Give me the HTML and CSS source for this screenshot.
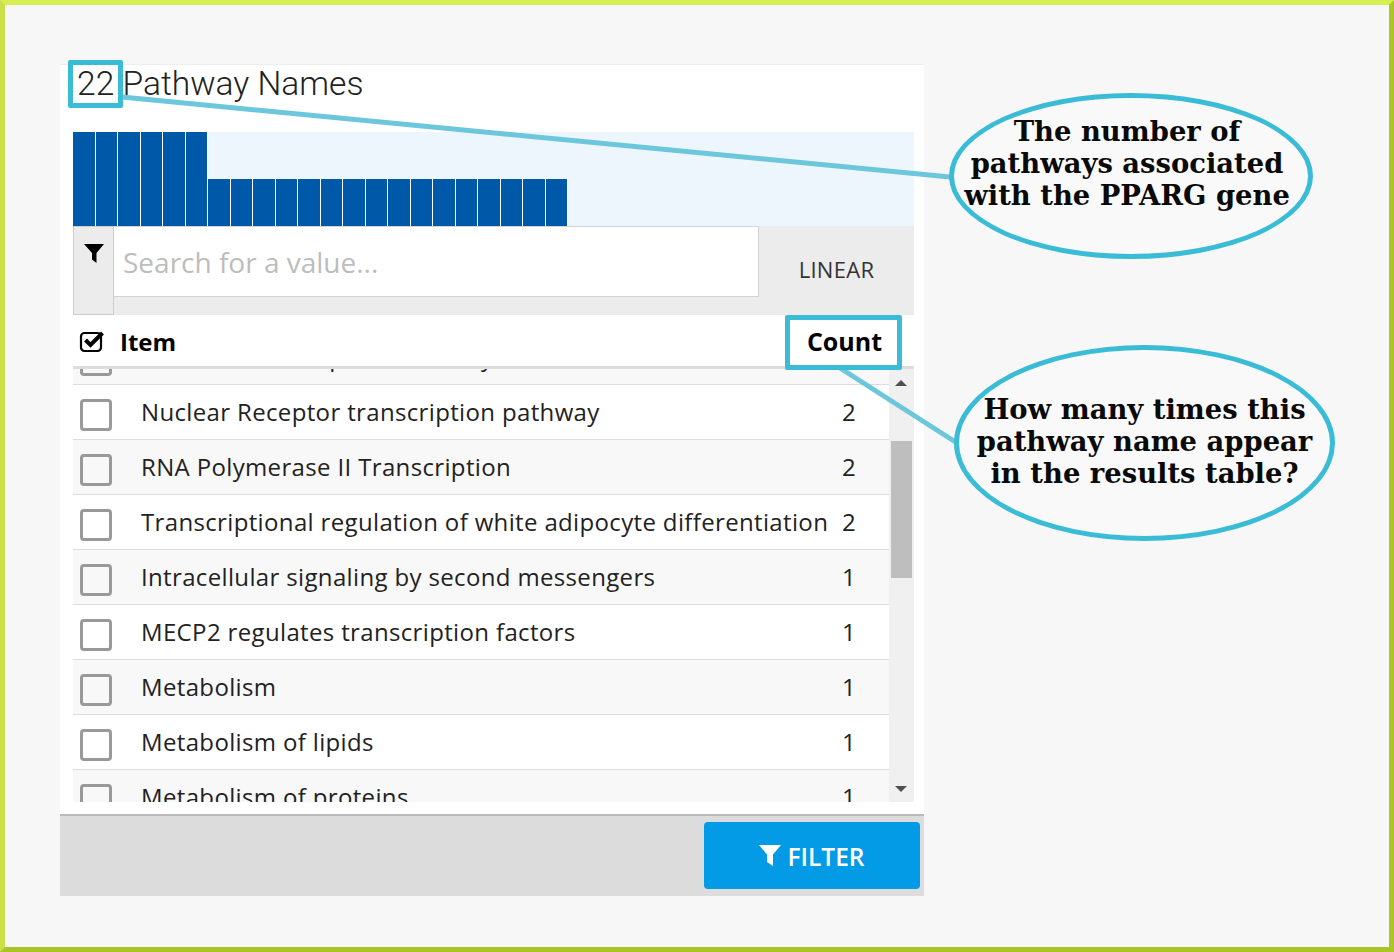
FILE: index.html
```html
<!DOCTYPE html>
<html>
  <head>
    <meta charset="utf-8">
    <link rel="stylesheet" href="styles.css">
    <title>Pathway Names</title>
  </head>
  <body>
    <div class="panel">
      <h2 class="title"><span class="count-num">22</span> Pathway Names</h2>
      <div class="bars">
        <i class="bar tall"></i><i class="bar tall"></i><i class="bar tall"></i><i class="bar tall"></i><i class="bar tall"></i><i class="bar tall"></i>
        <i class="bar"></i><i class="bar"></i><i class="bar"></i><i class="bar"></i><i class="bar"></i><i class="bar"></i><i class="bar"></i><i class="bar"></i>
        <i class="bar"></i><i class="bar"></i><i class="bar"></i><i class="bar"></i><i class="bar"></i><i class="bar"></i><i class="bar"></i><i class="bar"></i>
      </div>
      <div class="search-row">
        <div class="filter-addon">
          <svg width="22" height="22" viewBox="0 0 22 22"><path d="M0 2h20L12.500 11v10L8 17.500V11z" fill="#000"/></svg>
        </div>
        <div class="search-box">
          <div class="search-input">Search for a value...</div>
        </div>
        <div class="linear">LINEAR</div>
      </div>
      <div class="table-head">
        <svg class="head-check" width="26" height="24" viewBox="0 0 26 24">
          <rect x="2" y="4" width="20" height="18" rx="3.500" fill="none" stroke="#000" stroke-width="2.200"/>
          <path d="M6.500 11l5 5L23.500 4" fill="none" stroke="#000" stroke-width="4"/>
        </svg>
        <span class="head-item">Item</span>
        <span class="head-count">Count</span>
      </div>
      <div class="list-wrap">
        <div class="list">
          <div class="row first"><span class="box"></span><span class="name">Generic Transcription Pathway</span><span class="num">2</span></div>
          <div class="row"><span class="box"></span><span class="name">Nuclear Receptor transcription pathway</span><span class="num">2</span></div>
          <div class="row"><span class="box"></span><span class="name">RNA Polymerase II Transcription</span><span class="num">2</span></div>
          <div class="row"><span class="box"></span><span class="name">Transcriptional regulation of white adipocyte differentiation</span><span class="num">2</span></div>
          <div class="row"><span class="box"></span><span class="name">Intracellular signaling by second messengers</span><span class="num">1</span></div>
          <div class="row"><span class="box"></span><span class="name">MECP2 regulates transcription factors</span><span class="num">1</span></div>
          <div class="row"><span class="box"></span><span class="name">Metabolism</span><span class="num">1</span></div>
          <div class="row"><span class="box"></span><span class="name">Metabolism of lipids</span><span class="num">1</span></div>
          <div class="row"><span class="box"></span><span class="name">Metabolism of proteins</span><span class="num">1</span></div>
        </div>
        <div class="scrollbar">
          <div class="arrow-up"></div>
          <div class="thumb"></div>
          <div class="arrow-down"></div>
        </div>
      </div>
      <div class="footer">
        <button class="filter-btn">
          <svg width="22" height="22" viewBox="0 0 22 22"><path d="M0 0h22L14 9.500v11.500L8 17V9.500z" fill="#fff"/></svg>
          FILTER
        </button>
      </div>
    </div>

    <svg class="lines" width="1394" height="952">
      <line x1="122" y1="97" x2="950" y2="177"/>
      <line x1="840" y1="368" x2="957" y2="443"/>
    </svg>
    <div class="mark mark-num"></div>
    <div class="mark mark-count"></div>
    <div class="bubble bubble-one">The number of<br>pathways associated<br>with the PPARG gene</div>
    <div class="bubble bubble-two">How many times this<br>pathway name appear<br>in the results table?</div>
  </body>
</html>
```

FILE: styles.css
```css
* {
  box-sizing: border-box;
}
html, body {
  margin: 0;
  height: 952px;
  overflow: hidden;
}
body {
  position: relative;
  padding: 59px 0 0 55px;
  background: #f7f7f7;
  border: 5px solid;
  border-color: #d7ee55 #abc426 #abc426 #c9e04a;
  font-family: "Open Sans", "Noto Sans", sans-serif;
  color: #222;
}
.panel {
  width: 864px;
  height: 832px;
  background: #fff;
  display: flex;
  flex-direction: column;
  border-top: 1px solid #eee;
  padding-left: 13px;
}
.title {
  margin: 0;
  height: 67px;
  padding: 0 0 0 4px;
  font-family: Roboto, sans-serif;
  font-weight: 300;
  font-size: 33.600px;
  line-height: 37px;
  color: #222;
}
.bars {
  width: 841px;
  height: 94px;
  background: #eef6fd;
  display: flex;
  align-items: flex-end;
}
.bar {
  width: 22.500px;
  height: 47px;
  background: #0058a8;
  border-right: 1px solid #fff;
}
.bar.tall {
  height: 94px;
}
.search-row {
  width: 841px;
  height: 89px;
  display: flex;
  background: #ececec;
}
.filter-addon {
  width: 41px;
  height: 89px;
  padding: 15px 0 0 10px;
  border: 1px solid #ccc;
}
.search-box {
  width: 645px;
}
.search-input {
  height: 71px;
  background: #fff;
  border: 1px solid #d4d4d4;
  border-left: 0;
  padding: 15px 0 0 9px;
  font-size: 28px;
  line-height: 40px;
  color: #bdbdbd;
}
.linear {
  flex: 1;
  text-align: center;
  padding-top: 28px;
  font-size: 22px;
  letter-spacing: 0.300px;
  line-height: 30px;
  color: #333;
}
.table-head {
  width: 841px;
  height: 54px;
  flex: none;
  display: flex;
  align-items: center;
  padding-top: 1px;
  border-bottom: 3px solid #ddd;
  font-weight: 700;
  font-size: 24px;
  color: #000;
}
.head-check {
  margin-left: 6px;
}
.head-item {
  margin-left: 15px;
  flex: 1;
}
.head-count {
  margin-right: 32px;
  font-size: 25px;
}
.list-wrap {
  width: 841px;
  height: 433px;
  flex: none;
  display: flex;
  overflow: hidden;
}
.list {
  width: 816px;
  overflow: hidden;
}
.row {
  height: 55px;
  display: flex;
  align-items: center;
  border-bottom: 1px solid #ddd;
  background: #fff;
  font-size: 24px;
  letter-spacing: 0.350px;
  color: #222;
}
.row:nth-child(odd) {
  background: #f8f8f8;
}
.row.first {
  margin-top: -39px;
}
.box {
  width: 32px;
  height: 32px;
  margin: 6px 0 0 7px;
  border: 3px solid #999;
  border-radius: 4px;
  flex: none;
}
.name {
  margin-left: 29px;
  padding-bottom: 2px;
  flex: 1;
  white-space: nowrap;
}
.num {
  width: 60px;
  padding: 0 33px 2px 0;
  text-align: right;
}
.scrollbar {
  width: 25px;
  background: #f0f0f0;
  position: relative;
}
.arrow-up, .arrow-down {
  position: absolute;
  left: 6px;
  width: 0;
  height: 0;
  border-left: 6px solid transparent;
  border-right: 6px solid transparent;
}
.arrow-up {
  top: 11px;
  border-bottom: 6px solid #505050;
}
.arrow-down {
  bottom: 10px;
  border-top: 6px solid #505050;
}
.thumb {
  position: absolute;
  top: 72px;
  left: 2px;
  width: 21px;
  height: 137px;
  background: #bebebe;
}
.footer {
  margin: 12px 0 0 -13px;
  flex: 1;
  background: #dcdcdc;
  border-top: 2px solid #bbb;
  display: flex;
  justify-content: flex-end;
  align-items: flex-start;
  padding: 6px 4px 0 0;
}
.filter-btn {
  width: 216px;
  height: 67px;
  padding-top: 2px;
  background: #039be5;
  border: 0;
  border-radius: 4px;
  color: #fff;
  font-family: "Open Sans", sans-serif;
  font-weight: 600;
  font-size: 24.500px;
  display: flex;
  align-items: center;
  justify-content: center;
  gap: 6px;
}
.lines {
  position: absolute;
  left: -5px;
  top: -5px;
}
.lines line {
  stroke: #6cc6dc;
  stroke-width: 5;
}
.mark {
  position: absolute;
  border: 5px solid #3bbcd6;
  border-radius: 2px;
}
.mark-num {
  left: 63px;
  top: 55px;
  width: 55px;
  height: 48px;
}
.mark-count {
  left: 780px;
  top: 310px;
  width: 117px;
  height: 55px;
}
.bubble {
  position: absolute;
  border: 5px solid #3bbcd6;
  border-radius: 50%;
  display: flex;
  align-items: center;
  justify-content: center;
  text-align: center;
  font-family: "DejaVu Serif", serif;
  font-weight: 700;
  font-size: 27.400px;
  line-height: 32px;
  color: #0a0a0a;
  background: #f9f9f9;
}
.bubble-one {
  left: 944px;
  top: 88px;
  width: 364px;
  height: 166px;
  padding: 0 8px 26px 0;
}
.bubble-two {
  left: 949px;
  top: 340px;
  width: 381px;
  height: 196px;
  padding-bottom: 4px;
}
```
